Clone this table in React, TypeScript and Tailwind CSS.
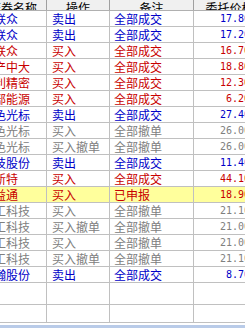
import React from 'react';

type Tone = 'b' | 'r' | 'g';

interface Order {
  name: string;
  op: string;
  note: string;
  price: string;
  tone: Tone;
  hl?: boolean;
}

const orders: Order[] = [
  { name: '联众', op: '卖出', note: '全部成交', price: '17.80', tone: 'b' },
  { name: '联众', op: '卖出', note: '全部成交', price: '17.20', tone: 'b' },
  { name: '联众', op: '买入', note: '全部成交', price: '16.70', tone: 'r' },
  { name: '产中大', op: '买入', note: '全部成交', price: '18.80', tone: 'r' },
  { name: '利精密', op: '买入', note: '全部成交', price: '12.30', tone: 'r' },
  { name: '部能源', op: '买入', note: '全部成交', price: '6.20', tone: 'r' },
  { name: '色光标', op: '卖出', note: '全部成交', price: '27.40', tone: 'b' },
  { name: '色光标', op: '买入', note: '全部撤单', price: '26.00', tone: 'g' },
  { name: '色光标', op: '买入撤单', note: '全部撤单', price: '26.00', tone: 'g' },
  { name: '技股份', op: '卖出', note: '全部成交', price: '11.40', tone: 'b' },
  { name: '新特', op: '买入', note: '全部成交', price: '44.10', tone: 'r' },
  { name: '益通', op: '买入', note: '已申报', price: '18.90', tone: 'r', hl: true },
  { name: '工科技', op: '买入', note: '全部撤单', price: '21.10', tone: 'g' },
  { name: '工科技', op: '买入撤单', note: '全部撤单', price: '21.00', tone: 'g' },
  { name: '工科技', op: '买入', note: '全部撤单', price: '21.00', tone: 'g' },
  { name: '工科技', op: '买入撤单', note: '全部撤单', price: '21.10', tone: 'g' },
  { name: '瀚股份', op: '卖出', note: '全部成交', price: '8.70', tone: 'b' },
];

const toneClass: Record<Tone, string> = {
  b: 'text-[#0000c8]',
  r: 'text-[#c80000]',
  g: 'text-[#808080]',
};

const cols = 'grid grid-cols-[67px_63px_84px_72px]';
const cell = 'border-r border-[#c0c0c0] whitespace-nowrap overflow-hidden leading-[15px]';

const App: React.FC = () => {
  return (
    <div className="w-[245px] h-[328px] overflow-hidden bg-white flex flex-col font-['Noto_Sans_CJK_SC',sans-serif] text-[12px]">
      <div className="ml-[-20px] w-[286px]">
        <div className={`${cols} h-[11px] bg-[#f0f0f0] border-b border-[#b0b0b0] overflow-hidden text-black`}>
          {['证券名称', '操作', '备注', '委托价格'].map((h) => (
            <div key={h} className="flex items-end justify-center border-r border-[#a0a0a0]">
              <span className="leading-[16px] whitespace-nowrap">{h}</span>
            </div>
          ))}
        </div>

        {orders.map((o, i) => (
          <div
            key={i}
            className={`${cols} h-[16px] border-b border-[#c0c0c0] ${toneClass[o.tone]} ${o.hl ? 'bg-[#ffff9c]' : ''}`}
          >
            <div className={`${cell} pl-[14px]`}>{o.name}</div>
            <div className={`${cell} pl-[5px]`}>{o.op}</div>
            <div className={`${cell} pl-[4px]`}>{o.note}</div>
            <div className={`${cell} pr-[15px] text-right font-['DejaVu_Sans_Mono',monospace] text-[10px]`}>
              {o.price}
            </div>
          </div>
        ))}

        <div className={`${cols} h-[22px] border-b border-[#c0c0c0]`}>
          <div className={cell} />
          <div className={cell} />
          <div className={cell} />
          <div className={cell} />
        </div>
        <div className={`${cols} h-[18px] border-b border-[#c0c0c0]`}>
          <div className={cell} />
          <div className={cell} />
          <div className={cell} />
          <div className={cell} />
        </div>
      </div>
      <div className="mt-[2px] h-[3px] bg-[#b9cbe8]" />
    </div>
  );
};

export default App;
